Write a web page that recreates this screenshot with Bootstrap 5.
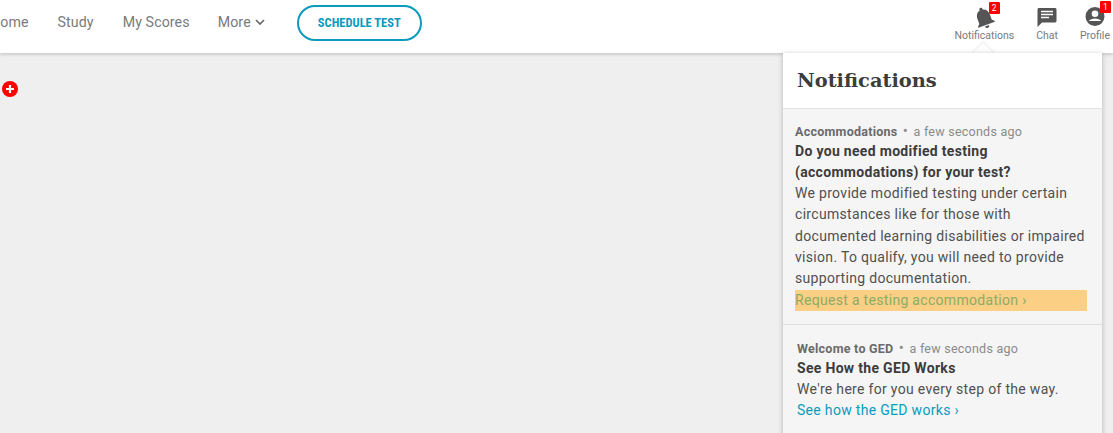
<!DOCTYPE html>
<html lang="en">
<head>
    <meta charset="UTF-8">
    <title>Notifications</title>
    <link href="https://cdn.jsdelivr.net/npm/bootstrap@5.3.0/dist/css/bootstrap.min.css" rel="stylesheet">
    <style>
        html, body { height: 433px; overflow: hidden; }
        body { background: #efefef; font-family: Roboto, "Liberation Sans", sans-serif; color: #444; }
        .top-bar { height: 53px; background: #fff; box-shadow: 0 1px 4px rgba(0,0,0,.22); padding: 0 3px 7px 0; position: relative; z-index: 1; }
        .main-links { margin-left: -10px; gap: 29px; }
        .main-links a { color: #7a7a7a; font-size: 14.2px; text-decoration: none; letter-spacing: .1px; }
        .main-links a.more-link { margin-left: -1px; }
        .test-btn { margin-left: 3px; width: 125px; height: 36px; padding: 0; border: 2px solid #0a9bbd; border-radius: 18px; color: #0a9bbd; font-family: "Roboto Condensed", Roboto, sans-serif; font-size: 12.5px; font-weight: 700; letter-spacing: 0; }
        .side-links { gap: 22px; }
        .side-link { position: relative; color: #7a7a7a; font-size: 10.5px; line-height: 12px; text-align: center; text-decoration: none; padding-top: 6px; }
        .side-link svg { display: block; margin: 0 auto 2px; fill: #555; }
        .red-count { position: absolute; top: 2px; width: 11px; height: 12px; background: #f00; color: #fff; font-size: 8.5px; line-height: 12px; text-align: center; border-radius: 1px; }
        .panel-arrow { position: absolute; left: 975px; top: 46px; width: 16px; height: 16px; background: #fff; transform: rotate(45deg); box-shadow: -1px -1px 2px rgba(0,0,0,.08); z-index: 2; }
        .notify-panel { position: absolute; left: 783px; top: 53px; width: 319px; height: 400px; background: #f5f5f5; box-shadow: 0 1px 5px rgba(0,0,0,.25); z-index: 2; }
        .panel-head { height: 56px; background: #fff; border-bottom: 1px solid #e2e2e2; padding: 14px 14px 0; font-family: "DejaVu Serif", serif; font-size: 19.4px; font-weight: 700; color: #3c3c3c; line-height: 28px; }
        .notify-item { font-size: 14px; line-height: 21.3px; letter-spacing: .31px; color: #505050; }
        .item-one { padding: 12.5px 15px 13.5px 12px; border-bottom: 1px solid #ddd; }
        .item-two { padding: 13.5px 14px 0; }
        .item-meta { font-size: 12.5px; line-height: 19px; color: #8a8a8a; letter-spacing: .25px; }
        .item-meta b { color: #6a6a6a; font-weight: 700; }
        .item-meta i { font-style: normal; font-size: 15px; line-height: 1; margin: 0 2px; }
        .item-title { font-weight: 700; color: #3c3c3c; }
        .item-link { color: #0a9bbd; text-decoration: none; display: block; }
        .hilite { background: #fbcf84; color: #8cab66; }
        .plus-dot { position: absolute; left: 2px; top: 81px; }
    </style>
</head>
<body>
<nav class="top-bar d-flex align-items-center justify-content-between">
    <div class="main-links d-flex align-items-center">
        <a href="#">Home</a>
        <a href="#">Study</a>
        <a href="#">My Scores</a>
        <a href="#" class="more-link d-flex align-items-center gap-1">More
            <svg width="10" height="7" viewBox="0 0 10 7"><path d="M1 1l4 4 4-4" fill="none" stroke="#666" stroke-width="1.6"/></svg>
        </a>
        <button class="btn test-btn" type="button">SCHEDULE TEST</button>
    </div>
    <div class="side-links d-flex align-self-start">
        <a href="#" class="side-link">
            <svg width="24" height="22" viewBox="2 1.500 20 20"><path transform="rotate(-20 12 12)" d="M12 22c1.100 0 2-.9 2-2h-4c0 1.100.9 2 2 2zm6-6v-5c0-3.070-1.640-5.640-4.500-6.320V4c0-.83-.67-1.500-1.500-1.500s-1.500.67-1.500 1.500v.68C7.630 5.360 6 7.920 6 11v5l-2 2v1h16v-1l-2-2z"/></svg>
            Notifications
            <span class="red-count" style="left:34px">2</span>
        </a>
        <a href="#" class="side-link">
            <svg width="20" height="22" viewBox="0 0 20 22"><path d="M2 2h16c.8 0 1.500.7 1.500 1.500V15c0 .8-.7 1.500-1.500 1.500H5L.5 21V3.500C.5 2.700 1.200 2 2 2z"/><path d="M4 5.500h12M4 8.500h12M4 11.500h8" stroke="#fff" stroke-width="1.600"/></svg>
            Chat
        </a>
        <a href="#" class="side-link">
            <svg width="20" height="22" viewBox="0 0 20 22"><path fill-rule="evenodd" d="M10 1a9.500 9.500 0 1 0 0 19 9.500 9.500 0 0 0 0-19zm0 3.500a3.300 3.300 0 1 1 0 6.600 3.300 3.300 0 0 1 0-6.600zM3.800 15c1-1.800 3.600-2.600 6.200-2.600s5.200.8 6.200 2.600H3.800z"/></svg>
            Profile
            <span class="red-count" style="left:20px;top:1px">1</span>
        </a>
    </div>
</nav>

<svg class="plus-dot" width="16" height="16" viewBox="0 0 16 16"><circle cx="8" cy="8" r="8" fill="#f00"/><path d="M8 4v8M4 8h8" stroke="#fff" stroke-width="2.200"/></svg>

<div class="panel-arrow"></div>
<section class="notify-panel">
    <div class="panel-head">Notifications</div>
    <div class="notify-item item-one">
        <div class="item-meta"><b>Accommodations</b> <i>•</i> a few seconds ago</div>
        <div class="item-title">Do you need modified testing<br>(accommodations) for your test?</div>
        <div>We provide modified testing under certain circumstances like for those with documented learning disabilities or impaired vision. To qualify, you will need to provide supporting documentation.</div>
        <a href="#" class="item-link hilite">Request a testing accommodation ›</a>
    </div>
    <div class="notify-item item-two">
        <div class="item-meta"><b>Welcome to GED</b> <i>•</i> a few seconds ago</div>
        <div class="item-title">See How the GED Works</div>
        <div>We're here for you every step of the way.</div>
        <a href="#" class="item-link">See how the GED works ›</a>
    </div>
</section>
<script src="https://cdn.jsdelivr.net/npm/bootstrap@5.3.0/dist/js/bootstrap.bundle.min.js"></script>
</body>
</html>
